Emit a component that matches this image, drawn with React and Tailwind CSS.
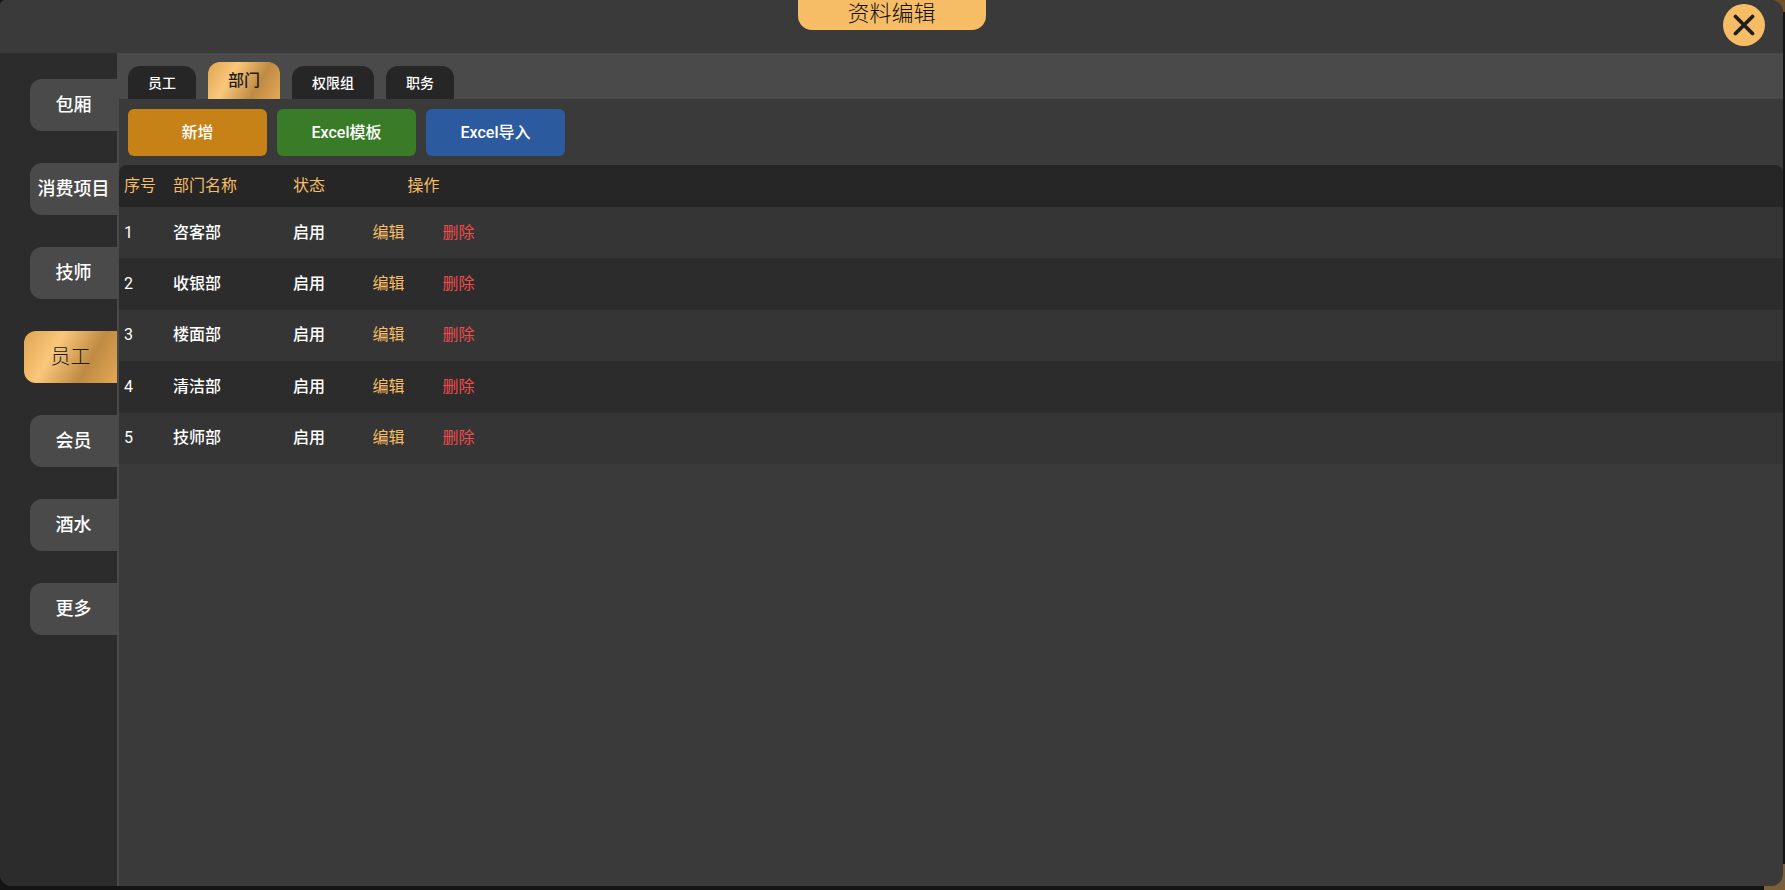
import clsx from 'clsx';

const menuItems = ['包厢', '消费项目', '技师', '员工', '会员', '酒水', '更多'];
const tabs = ['员工', '部门', '权限组', '职务'];
const actions = [
  { label: '新增', color: 'bg-[#c68217]' },
  { label: 'Excel模板', color: 'bg-[#3a7b28]' },
  { label: 'Excel导入', color: 'bg-[#2c5a9e]' },
];
const departments = ['咨客部', '收银部', '楼面部', '清洁部', '技师部'];

const gold =
  'bg-[linear-gradient(120deg,#dfa450_0%,#fbc77b_33%,#bf8b43_68%,#e4a856_100%)] text-[#1a1a1a]';

function Header() {
  return (
    <header className="grid h-[53px] grid-cols-[1fr_188px_1fr] items-start">
      <h1 className="col-start-2 h-[30px] rounded-b-[14px] bg-[#f6bd66] text-center text-[22px] leading-[28px] font-light text-[#111]">
        资料编辑
      </h1>
      <button
        type="button"
        aria-label="关闭"
        className="mt-1 mr-[18px] flex size-[42px] items-center justify-center justify-self-end rounded-full bg-[#f6bd66]"
      >
        <svg viewBox="0 0 22 22" className="size-[22px]" stroke="#1f1f1f" strokeWidth="3.8" strokeLinecap="round">
          <path d="M2.5 2.5 19.5 19.5M19.5 2.5 2.5 19.5" />
        </svg>
      </button>
    </header>
  );
}

function Sidebar() {
  return (
    <nav className="flex w-[117px] shrink-0 flex-col items-end gap-8 bg-[#2c2c2c] pt-[26px]">
      {menuItems.map((item) => (
        <button
          key={item}
          type="button"
          className={clsx(
            'h-[52px] rounded-l-xl',
            item === '员工' ? `w-[93px] text-[20px] font-light ${gold}` : 'w-[87px] bg-[#4a4a4a] text-[18px] font-medium'
          )}
        >
          {item}
        </button>
      ))}
    </nav>
  );
}

function Tabs() {
  return (
    <div className="flex h-[46px] items-end gap-3 bg-[#4a4a4a] pl-[9px]">
      {tabs.map((tab) => (
        <button
          key={tab}
          type="button"
          className={clsx(
            'rounded-t-xl px-5 font-medium',
            tab === '部门' ? `h-[37px] text-[16px] ${gold}` : 'h-[33px] bg-[#262626] text-[14px]'
          )}
        >
          {tab}
        </button>
      ))}
    </div>
  );
}

function DepartmentTable() {
  return (
    <table className="h-[299px] w-full table-fixed text-left text-[16px]">
      <colgroup>
        <col className="w-[50px]" />
        <col className="w-[120px]" />
        <col className="w-[76px]" />
        <col className="w-[117px]" />
        <col />
      </colgroup>
      <thead>
        <tr className="h-[42px] text-[#f6bd66]">
          <th className="rounded-tl-lg bg-[#262626] pl-[5px] font-normal">序号</th>
          <th className="bg-[#262626] pl-1 font-normal">部门名称</th>
          <th className="bg-[#262626] pl-1 font-normal">状态</th>
          <th className="bg-[#262626] text-center font-normal">操作</th>
          <td className="rounded-tr-lg bg-[#262626]" />
        </tr>
      </thead>
      <tbody>
        {departments.map((name, index) => (
          <tr key={name} className="font-medium odd:bg-[#353535] even:bg-[#2c2c2c]">
            <td className="pl-[5px] font-normal">{index + 1}</td>
            <td className="pl-1">{name}</td>
            <td className="pl-1">启用</td>
            <td>
              <div className="flex justify-center gap-[38px] font-normal">
                <button type="button" className="text-[#f6bd66]">
                  编辑
                </button>
                <button type="button" className="text-[#f04c4c]">
                  删除
                </button>
              </div>
            </td>
            <td />
          </tr>
        ))}
      </tbody>
    </table>
  );
}

export default function App() {
  return (
    <div className="relative h-screen bg-[#141414] pr-[2px] pb-1 font-[Roboto,'Noto_Sans_CJK_SC',sans-serif] leading-6 text-white">
      <div className="absolute top-0 right-0 h-3 w-3 bg-[#6f5029]" />
      <div className="absolute right-0 bottom-0 h-[26px] w-[21px] bg-[#7a5f3a]" />
      <div className="relative flex h-full flex-col overflow-hidden rounded-xl rounded-tl-[5px] bg-[#3a3a3a]">
        <Header />
        <div className="flex flex-1">
          <Sidebar />
          <main className="min-w-0 flex-1 border-l-2 border-[#4a4a4a]">
            <Tabs />
            <div className="flex gap-[10px] pt-[10px] pb-[9px] pl-[9px]">
              {actions.map(({ label, color }) => (
                <button
                  key={label}
                  type="button"
                  className={clsx('h-[47px] w-[139px] rounded-md text-[16px] font-medium', color)}
                >
                  {label}
                </button>
              ))}
            </div>
            <DepartmentTable />
          </main>
        </div>
      </div>
    </div>
  );
}
